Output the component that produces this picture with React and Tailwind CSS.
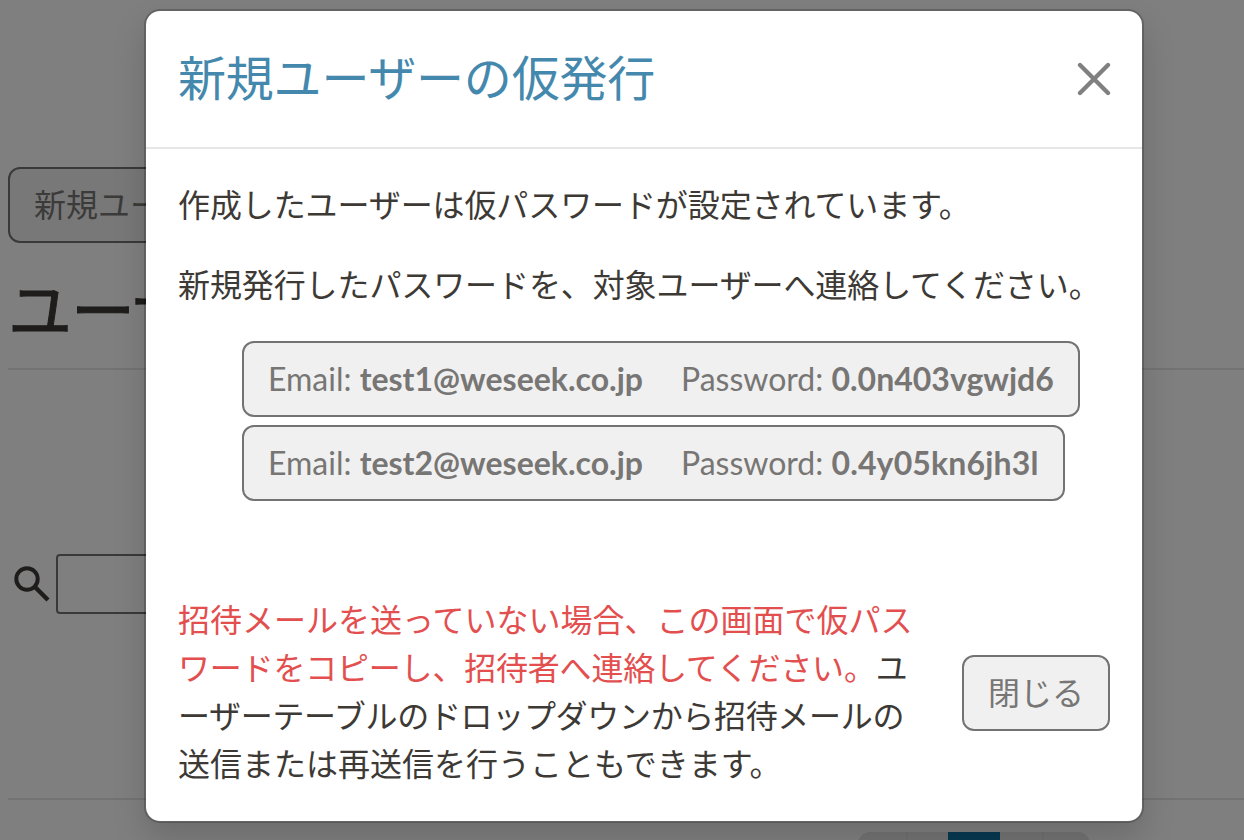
const accounts = [
  { email: 'test1@weseek.co.jp', password: '0.0n403vgwjd6', tracking: 'tracking-normal' },
  { email: 'test2@weseek.co.jp', password: '0.4y05kn6jh3l', tracking: 'tracking-[0.15px]' },
];

function UserManagement() {
  return (
    <div className="flex h-[840px] flex-col whitespace-nowrap pl-2 pt-[167px]">
      <button className="h-[76px] w-[460px] shrink-0 rounded-xl border-2 border-[#747372] bg-[#f0f0f0] px-6 text-left text-[32px] leading-[72px] text-[#777674]">
        新規ユーザーの仮発行
      </button>
      <h2 className="mt-[29px] h-[98px] shrink-0 border-b-2 border-[#e6e6e6] text-[64px] font-normal leading-[76px] tracking-[-1px] text-[#3d3a36] [-webkit-text-stroke:1px_#3d3a36]">
        ユーザー管理
      </h2>
      <div className="mt-[184px] flex h-[60px] shrink-0 items-center">
        <svg viewBox="0 0 48 48" className="mb-1.5 h-12 w-12 shrink-0" fill="none" stroke="#3d3a36" strokeWidth="4">
          <circle cx="19" cy="22" r="10.700" />
          <path d="M26.500 29.500 L40 43" strokeWidth="4.400" />
        </svg>
        <div className="h-[60px] w-[500px] rounded border-2 border-[#747372]" />
      </div>
      <div className="mt-[184px] h-[2px] shrink-0 bg-[#e6e6e6]" />
      <div className="ml-[850px] mt-8 flex h-[60px] w-[232px] shrink-0 overflow-hidden rounded-xl bg-[#e6e6e6]">
        <div className="w-[50px] border-r-2 border-[#dedede]" />
        <div className="ml-[40px] w-[52px] bg-[#0f72a3]" />
        <div className="w-[44px] border-r-2 border-[#dedede]" />
      </div>
    </div>
  );
}

function CredentialButton({ email, password, tracking }) {
  return (
    <button className="flex h-[76px] items-center gap-[38px] whitespace-nowrap rounded-xl border-2 border-[#747372] bg-[#f0f0f0] px-6 text-[32px] leading-[48px] text-[#777674]">
      <span>Email: <strong className="font-bold">{email}</strong></span>
      <span>Password: <strong className={`font-bold ${tracking}`}>{password}</strong></span>
    </button>
  );
}

export default function App() {
  return (
    <div lang="ja" className="relative h-[840px] w-[1244px] overflow-hidden bg-white font-[Lato,'Noto_Sans_CJK_JP',sans-serif] text-[#3d3a36]">
      <UserManagement />
      <div className="absolute inset-0 flex items-start bg-black/50 pl-36 pt-[9px]">
        <div role="dialog" className="flex h-[814px] w-[1000px] flex-col rounded-2xl border-2 border-black/20 bg-white bg-clip-padding shadow-[0_16px_32px_rgba(0,0,0,0.15)]">
          <header className="flex h-[138px] items-start justify-between border-b-2 border-[#e6e6e6] pl-8 pr-[31px]">
            <h5 className="pt-[31px] text-[48px] leading-[72px] tracking-[-0.2px] text-[#4489ad]">新規ユーザーの仮発行</h5>
            <button aria-label="Close" className="mt-[51px]">
              <svg viewBox="0 0 34 34" className="h-[34px] w-[34px]" stroke="#808080" strokeWidth="4.300" strokeLinecap="round">
                <path d="M3 3 L31 31 M31 3 L3 31" />
              </svg>
            </button>
          </header>
          <div className="flex h-[384px] flex-col px-8 pt-8 text-[32px] leading-[48px]">
            <p className="whitespace-nowrap tracking-[-0.1px]">作成したユーザーは仮パスワードが設定されています。</p>
            <p className="mt-8 whitespace-nowrap tracking-[-0.1px]">新規発行したパスワードを、対象ユーザーへ連絡してください。</p>
            <div className="mt-8 flex flex-col items-start gap-2 pl-16">
              {accounts.map((account) => (
                <CredentialButton key={account.email} {...account} />
              ))}
            </div>
          </div>
          <footer className="flex flex-1 items-start justify-between pl-8 pr-8 pt-[63px]">
            <p className="whitespace-nowrap text-[32px] leading-[48px]">
              <span className="text-[#e34f4f]">招待メールを送っていない場合、この画面で仮パス<br /><span className="tracking-[-0.2px]">ワードをコピーし、招待者へ連絡してください。</span></span>ユ<br />
              <span className="tracking-[-0.32px]">ーザーテーブルのドロップダウンから招待メールの</span><br />
              送信または再送信を行うこともできます。
            </p>
            <button className="mt-[59px] h-[76px] w-[148px] rounded-xl border-2 border-[#747372] bg-[#f0f0f0] text-[32px] leading-[72px] text-[#777674]">閉じる</button>
          </footer>
        </div>
      </div>
    </div>
  );
}
